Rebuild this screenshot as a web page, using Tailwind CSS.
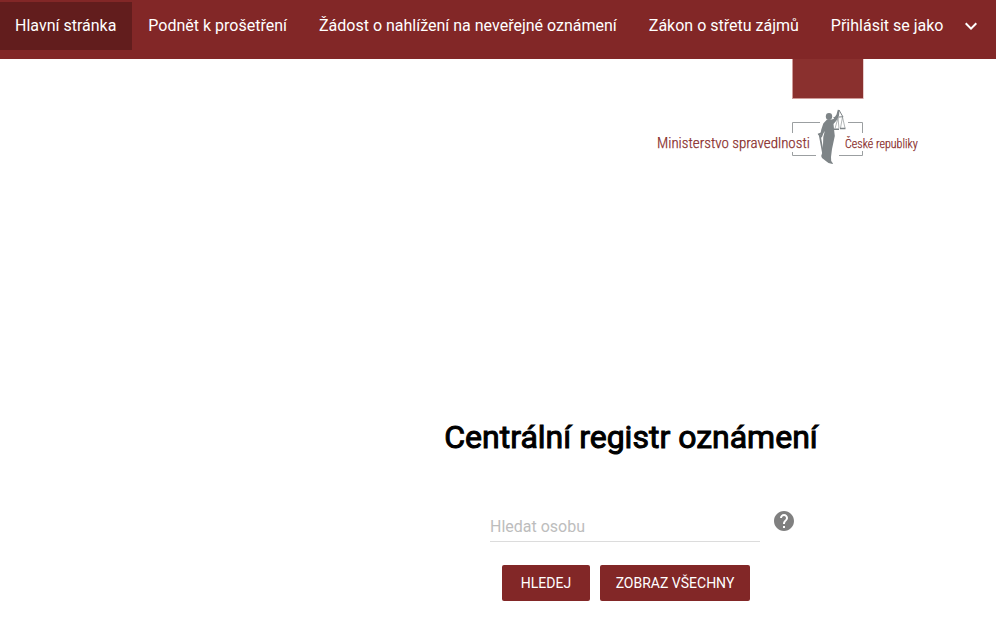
<!DOCTYPE html>
<html lang="cs">
<head>
    <meta charset="UTF-8">
    <meta name="viewport" content="width=device-width, initial-scale=1.0">
    <title>Centrální registr oznámení</title>
    <script src="https://cdn.jsdelivr.net/npm/@tailwindcss/browser@4"></script>
</head>
<body class="bg-white font-[Roboto,sans-serif] text-black">

    <nav class="flex items-start bg-[#822727] pt-0.5 pb-[9px] text-base leading-[48px] whitespace-nowrap text-white">
        <a href="#" class="bg-[#621d1d] pr-4 pl-[15px]">Hlavní stránka</a>
        <a href="#" class="px-4">Podnět k prošetření</a>
        <a href="#" class="px-4">Žádost o nahlížení na neveřejné oznámení</a>
        <a href="#" class="px-4">Zákon o střetu zájmů</a>
        <button type="button" class="flex items-center gap-4 px-4">
            Přihlásit se jako
            <svg class="size-6" viewBox="0 0 24 24" fill="currentColor"><path d="M7.41 8.59 12 13.17l4.59-4.58L18 10l-6 6-6-6z"/></svg>
        </button>
    </nav>

    <header class="flex justify-end pr-[76px]">
        <a href="#" aria-label="Ministerstvo spravedlnosti České republiky">
            <svg class="h-[116px] w-[265px]" viewBox="655 59 265 116">
                <rect x="792" y="58" width="71.500" height="41" fill="#cf9b99"/>
                <rect x="793" y="58" width="70" height="40" fill="#8a302e"/>
                <path d="M820 122.500H792.500V133M792.500 152v3.500H816M848 122.500h14.500V133M862.500 151v4.500H839" fill="none" stroke="#9b9fa1"/>
                <g fill="#7e8487">
                    <ellipse cx="829" cy="116.500" rx="3.200" ry="3.400"/>
                    <path d="M827 119.500h4.500l2-.5 3-4.500 1.300-4.800 1.700.3-.5 5.500-2.500 5-3 3.500.5 5 .8 7-1.300 6-1.500 7-1 8 .2 4 1.800 2.500-.5 .5-4-1-2-1.500-4.500-3.500-.8-2 1.300-4 .5-7 .3-8 1.500-6-1.500 2.500-1.500 4-2-.5 1.500-7.500 2-6z"/>
                </g>
                <g fill="none" stroke="#7e8487">
                    <path d="M818 134.500l4-1.500M819.500 134l3.500 19" stroke-width="1.700"/>
                    <path d="M833.500 117.500l9.500-.8M839 110l4 7"/>
                    <path d="M838 118l-3 10.500M838 118l1 10.500M842.500 117l-2 11M842.500 117l2.500 11" stroke-width=".6"/>
                    <path d="M834 129.300h5M840 128.500h5.500" stroke-width="1.400"/>
                </g>
                <g fill="#8a302e" stroke="#8a302e" stroke-width=".25" font-family="'Roboto Condensed', Roboto, sans-serif" font-weight="300">
                    <text x="657" y="148" font-size="15">Ministerstvo spravedlnosti</text>
                    <text x="845" y="148" font-size="12">České republiky</text>
                </g>
            </svg>
        </a>
    </header>

    <main class="flex flex-col items-center pt-[238px] pb-10 pl-[266px]">
        <h1 class="text-[32px] leading-12 [-webkit-text-stroke:1px_#000]">Centrální registr oznámení</h1>

        <form class="mt-12 w-[330px] pl-6">
            <div class="flex items-start gap-3">
                <input type="text" aria-label="Hledat osobu" placeholder="Hledat osobu" class="h-[33px] w-[270px] min-w-0 border-b border-[#dcdcdc] pt-0.5 text-base outline-none placeholder:text-[#bdbdbd]">
                <button type="button" aria-label="Nápověda">
                    <svg class="size-6" viewBox="0 0 24 24" fill="#808080"><path d="M12 2C6.480 2 2 6.480 2 12s4.480 10 10 10 10-4.480 10-10S17.520 2 12 2zm1 17h-2v-2h2v2zm2.070-7.750-.9.920C13.450 12.900 13 13.500 13 15h-2v-.5c0-1.100.45-2.100 1.170-2.830l1.240-1.260c.37-.36.59-.86.59-1.410 0-1.100-.9-2-2-2s-2 .9-2 2H8c0-2.210 1.790-4 4-4s4 1.790 4 4c0 .88-.36 1.680-.93 2.250z"/></svg>
                </button>
            </div>
            <div class="mt-[23px] ml-3 flex gap-2.5 text-sm leading-9 text-white">
                <button type="submit" class="w-[88px] rounded-xs bg-[#822727]">HLEDEJ</button>
                <button type="button" class="w-[150px] rounded-xs bg-[#822727]">ZOBRAZ VŠECHNY</button>
            </div>
        </form>
    </main>

</body>
</html>
